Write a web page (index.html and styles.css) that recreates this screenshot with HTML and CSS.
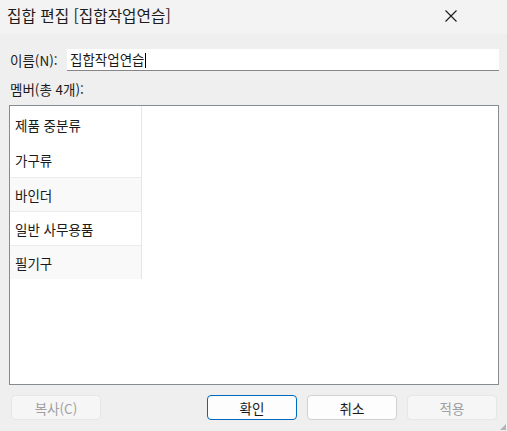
FILE: index.html
```html
<!DOCTYPE html>
<html lang="ko">
<head>
    <meta charset="UTF-8">
    <title>집합 편집</title>
    <link rel="stylesheet" href="styles.css">
</head>
<body>
    <div class="dialog">
        <div class="titlebar">
            <span class="title">집합 편집 [집합작업연습]</span>
            <svg class="close" width="12" height="12" viewBox="0 0 12 12">
                <path d="M0.5 0.5 L11.5 11.5 M11.5 0.5 L0.5 11.5" stroke="#1a1a1a" stroke-width="1.1" fill="none"/>
            </svg>
        </div>

        <div class="content">
            <div class="name-row">
                <label>이름(N):</label>
                <div class="name-input">집합작업연습<span class="caret"></span></div>
            </div>

            <div class="members-label">멤버(총 4개):</div>

            <div class="member-list">
                <div class="member-col">
                    <div class="member">제품 중분류</div>
                    <div class="member">가구류</div>
                    <div class="member alt">바인더</div>
                    <div class="member">일반 사무용품</div>
                    <div class="member alt">필기구</div>
                </div>
            </div>

            <div class="buttons">
                <button class="btn disabled">복사(C)</button>
                <div class="btn-group">
                    <button class="btn primary">확인</button>
                    <button class="btn">취소</button>
                    <button class="btn disabled">적용</button>
                </div>
            </div>
        </div>
        <div class="grip"></div>
    </div>
</body>
</html>
```

FILE: styles.css
```css
body {
    margin: 0;
    font-family: "Noto Sans CJK KR", "Noto Sans", sans-serif;
    color: #1a1a1a;
    background-color: #efefef;
}

.dialog {
    width: 507px;
    height: 431px;
    position: relative;
    background-color: #efefef;
    overflow: hidden;
}

.titlebar {
    height: 34px;
    background-color: #f3f3f3;
    display: flex;
    align-items: center;
    justify-content: space-between;
    padding: 0 50px 0 7px;
}

.title {
    font-size: 15.7px;
    color: #1c1c1c;
    margin-top: -3px;
}

.close {
    display: block;
    margin-top: -2px;
}

.content {
    padding: 15px 8px 0 9px;
}

.name-row {
    display: flex;
    align-items: center;
    height: 22px;
}

.name-row label {
    font-size: 13.5px;
    width: 57px;
    padding-left: 1px;
}

.name-input {
    flex: 1;
    height: 22px;
    box-sizing: border-box;
    background-color: #fff;
    border-bottom: 1px solid #868686;
    font-size: 13.5px;
    line-height: 21px;
    padding-left: 3px;
}

.caret {
    display: inline-block;
    width: 1px;
    height: 15px;
    background-color: #000;
    vertical-align: -3px;
}

.members-label {
    font-size: 13.5px;
    margin: 8px 0 0 1px;
    height: 22px;
    line-height: 20px;
}

.member-list {
    height: 280px;
    box-sizing: border-box;
    border: 1px solid #878c90;
    background-color: #fff;
    margin-top: 4px;
}

.member-col {
    width: 131px;
    border-right: 1px solid #e6e6e6;
}

.member {
    height: 34px;
    line-height: 34px;
    padding-left: 5px;
    font-size: 13.5px;
    background-color: #fff;
    border-top: 1px solid #ececec;
    box-sizing: border-box;
}

.member:first-child {
    height: 37px;
    line-height: 39px;
    border-top: none;
}

.member:nth-child(2) {
    border-top: none;
}

.member.alt {
    background-color: #f9f9f9;
}

.buttons {
    display: flex;
    justify-content: space-between;
    margin: 10px 2px 0 0;
    padding-left: 2px;
}

.btn-group {
    display: flex;
    gap: 10px;
}

.btn {
    width: 90px;
    height: 25px;
    box-sizing: border-box;
    font-family: inherit;
    font-size: 13.5px;
    color: #1a1a1a;
    background-color: #fdfdfd;
    border: 1px solid #d0d0d0;
    border-radius: 4px;
    padding: 0;
}

.btn.primary {
    border-color: #0067c0;
}

.btn.disabled {
    color: #a0a0a0;
    background-color: #f6f6f6;
    border-color: #e6e6e6;
}

.grip {
    position: absolute;
    right: 1px;
    bottom: 1px;
    width: 6px;
    height: 6px;
    background-image: radial-gradient(#b4b4b4 0.8px, transparent 1px);
    background-size: 2px 2px;
    clip-path: polygon(100% 0, 100% 100%, 0 100%);
}
```
